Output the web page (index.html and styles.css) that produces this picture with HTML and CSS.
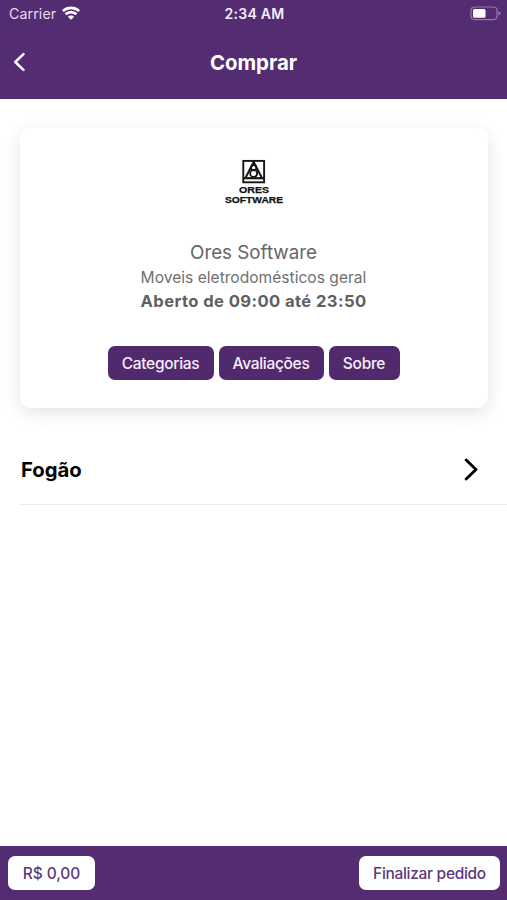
FILE: index.html
```html
<!DOCTYPE html>
<html lang="pt-BR">
<head>
<meta charset="utf-8">
<title>Comprar</title>
<link rel="stylesheet" href="styles.css">
</head>
<body>
<div class="app">
  <header class="header">
    <div class="status">
      <div class="carrier"><span class="carrier-name">Carrier</span>
        <svg class="wifi" width="18" height="14" viewBox="0 0 18 14" fill="none" stroke="#fff" stroke-width="2.6"><path d="M.8 5C5.6.8 12.4.8 17.2 5M3.6 8.3c3.1-2.9 7.7-2.9 10.8 0"/><path d="M9 13.8 5.8 10.7c1.7-1.7 4.7-1.7 6.4 0z" fill="#fff" stroke="none"/></svg>
      </div>
      <span class="time">2:34 AM</span>
      <svg class="battery" width="31" height="15" viewBox="0 0 31 15"><rect x="1" y="1" width="26" height="12.6" rx="3.5" fill="none" stroke="#9478a4" stroke-width="1.2"/><rect x="3" y="3" width="12.5" height="8.8" rx="1.5" fill="#fff"/><path d="M28.3 5.1q2.2.8 2.2 2.2t-2.2 2.2z" fill="#9478a4"/></svg>
    </div>
    <div class="nav">
      <svg class="back" width="14" height="20" viewBox="0 0 14 20" fill="none" stroke="#fff" stroke-width="2.5" stroke-linecap="round" stroke-linejoin="round"><path d="M11.5 2.2 3.2 10l8.3 7.8"/></svg>
      <h1 class="title">Comprar</h1>
    </div>
  </header>
  <main class="content">
    <section class="card">
      <svg class="logo" width="60" height="46" viewBox="0 0 60 46">
        <g fill="none" stroke="#151515"><rect x="19.3" y="1.9" width="20.8" height="21.4" stroke-width="1.9"/><path d="M19.5 19.2h21" stroke-width="2.2"/><path d="M21.8 18.2 29.7 3l7.9 15.2" stroke-width="2"/><circle cx="29.7" cy="8.8" r="2.6" stroke-width="1.7"/><circle cx="29.7" cy="14.4" r="3.5" stroke-width="1.8"/></g>
        <g class="logo-text"><text x="15" y="34" textLength="30" lengthAdjust="spacingAndGlyphs">ORES</text><text x="1" y="43.6" textLength="58" lengthAdjust="spacingAndGlyphs">SOFTWARE</text></g>
      </svg>
      <h2 class="name">Ores Software</h2>
      <p class="category">Moveis eletrodomésticos geral</p>
      <p class="hours">Aberto de 09:00 até 23:50</p>
      <div class="actions">
        <button class="btn categories">Categorias</button>
        <button class="btn reviews">Avaliações</button>
        <button class="btn about">Sobre</button>
      </div>
    </section>
    <div class="row"><span class="row-name">Fogão</span>
      <svg width="16" height="24" viewBox="0 0 16 24" fill="none" stroke="#000" stroke-width="2.9" stroke-linecap="round" stroke-linejoin="round"><path d="m3.2 2 9.8 9.5L3.2 21"/></svg>
    </div>
  </main>
  <footer class="footer">
    <button class="btn light total">R$ 0,00</button>
    <button class="btn light finish">Finalizar pedido</button>
  </footer>
</div>
</body>
</html>
```

FILE: styles.css
```css
* { box-sizing: border-box; }
body { margin: 0; font-family: Inter, "Liberation Sans", sans-serif; background: #fff; }
h1, h2, p { margin: 0; }
.app { height: 900px; display: flex; flex-direction: column; overflow: hidden; }
.header { height: 98.5px; flex: none; background: #542c72; color: #fff; }
.status { height: 27px; display: grid; grid-template-columns: 1fr auto 1fr; align-items: center; padding: 0 6px 0 8px; }
.carrier { display: flex; align-items: center; gap: 6px; padding-left: 1px; }
.carrier-name { font-size: 14.2px; letter-spacing: .1px; color: #e6dcec; }
.wifi { margin-top: -2px; }
.time { font-size: 14px; font-weight: 600; letter-spacing: .3px; color: #f3edf7; }
.battery { justify-self: end; }
.nav { height: 70px; display: grid; grid-template-columns: 40px 1fr 40px; align-items: center; }
.back { margin-left: 12px; }
.title { padding-top: 1px; font-size: 20.4px; line-height: 24px; font-weight: 700; text-align: center; }
.content { flex: 1; }
.card { height: 280px; margin: 29.5px 19px 0 20px; border-radius: 11px; background: #fff; box-shadow: 0 5px 18px rgba(0,0,0,.11); display: flex; flex-direction: column; align-items: center; padding: 31px 1px 0 0; }
.logo { display: block; }
.logo-text { font: 700 8.6px "Liberation Sans", sans-serif; fill: #111; stroke: #111; stroke-width: .25; }
.name { margin-top: 34px; font-size: 18.8px; line-height: 27px; font-weight: 400; color: #666; }
.category { font-size: 15.6px; line-height: 24px; color: #707070; }
.hours { font-size: 16.6px; line-height: 24px; font-weight: 700; letter-spacing: .41px; margin: -1px 0 1px; color: #606060; }
.actions { display: flex; gap: 5px; margin-top: 32px; }
.btn { height: 34px; padding: 0; border: 0; border-radius: 7px; background: #512a6e; color: #f7effa; font: 500 15.5px Inter, sans-serif; letter-spacing: -.3px; white-space: nowrap; }
.categories { width: 106px; }
.reviews { width: 105px; }
.about { width: 71px; }
.row { height: 97px; margin-left: 20px; padding: 27px 28px 0 1px; border-bottom: 1.5px solid #ececec; display: flex; align-items: flex-start; justify-content: space-between; }
.row svg { margin-top: 23px; }
.row-name { margin-top: 21px; font-size: 20.3px; line-height: 28px; font-weight: 700; color: #050505; }
.footer { height: 54px; flex: none; background: #542c72; display: flex; justify-content: space-between; padding: 10px 7px 0 8px; }
.light { background: #fff; color: #5b397a; }
.total { width: 87px; letter-spacing: -.1px; }
.finish { width: 141px; }
```
